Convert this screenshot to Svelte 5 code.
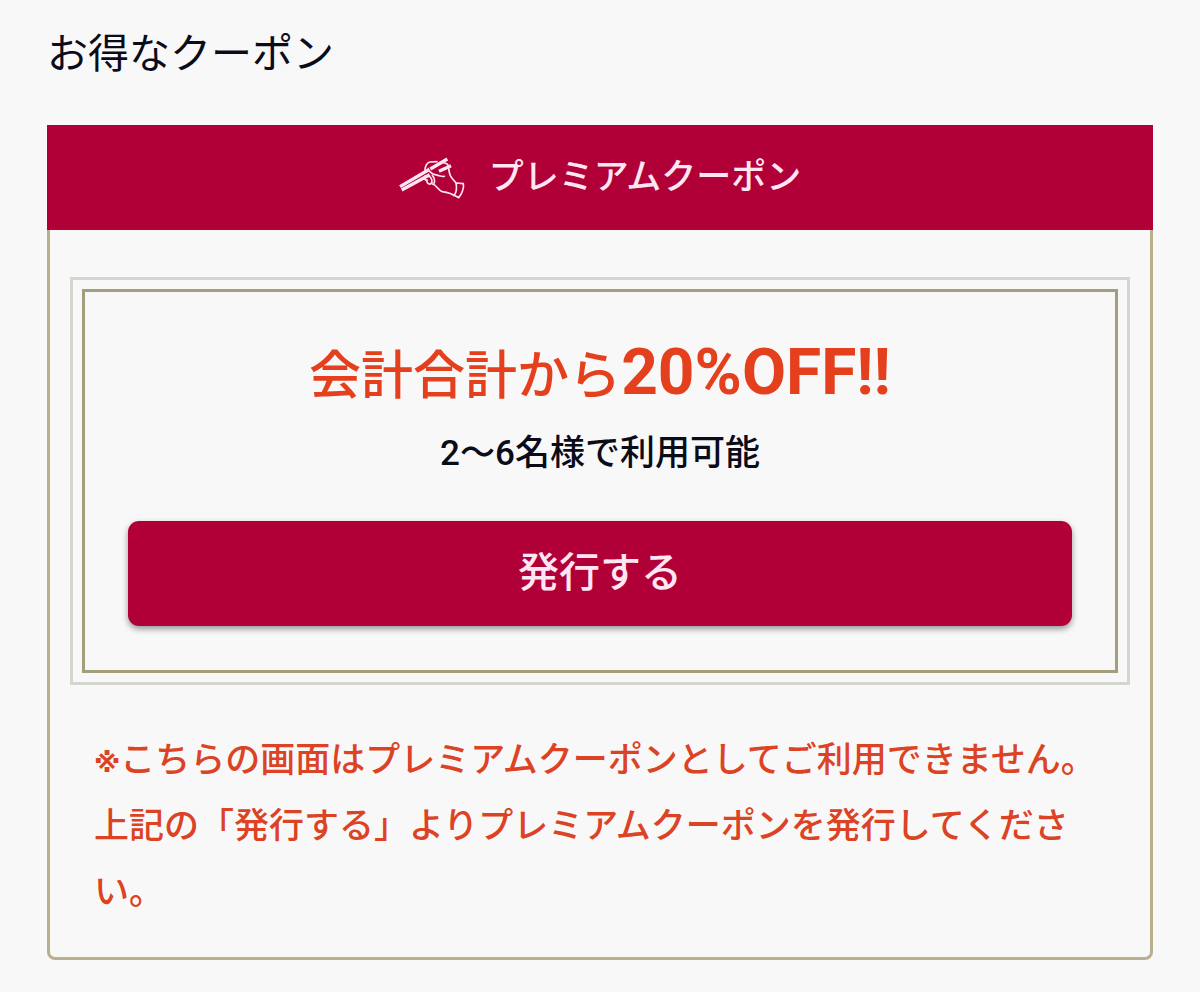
<script lang="ts">
  let issued = $state(false);

  const coupon = {
    offer: '会計合計から',
    discount: '20%OFF!!',
    condition: '2〜6名様で利用可能'
  };
</script>

<main class="page">
  <h1>お得なクーポン</h1>

  <section class="card">
    <header class="card-header">
      <svg class="icon" viewBox="28 32 198 132" aria-hidden="true">
        <g fill="none" stroke="currentColor" stroke-width="5" stroke-linecap="round" stroke-linejoin="round">
          <path d="M106 74 C107 62 112 52 121 50 L142 49" />
          <path d="M163 53 C170 53 174 57 176 61 M177 70 C178 77 179 84 182 91 C186 99 193 105 199 113" />
          <path d="M106 92 C102 99 107 107 113 104 M111 104 C111 116 121 120 126 112 M128 116 C142 119 144 135 158 139 C173 141 184 143 193 151" />
          <path d="M117 91 C123 96 129 104 126 112 M128 90 C134 98 138 104 133 114" />
          <path d="M116 70 C120 83 132 88 145 90 C152 92 158 95 164 93" />
          <path d="M199 113 L221 115 C224 128 216 147 207 157 L194 150 C201 139 202 127 199 113 Z" />
        </g>
        <g fill="none" stroke="currentColor" stroke-width="10">
          <path d="M31 124 L116 74 M122 71 L173 41" />
          <path d="M36 134 L120 88 M148 78 L184 61" />
        </g>
      </svg>
      <h2>プレミアムクーポン</h2>
    </header>

    <div class="card-body">
      <div class="frame">
        <div class="offer">
          <p class="headline">{coupon.offer}<strong>{coupon.discount}</strong></p>
          <p class="condition">{coupon.condition}</p>
          <button type="button" disabled={issued} onclick={() => (issued = true)}>発行する</button>
        </div>
      </div>

      <p class="note">
        <span class="mark">※</span>こちらの画面はプレミアムクーポンとしてご利用できません。<br />上記の「発行する」よりプレミアムクーポンを発行してください。
      </p>
    </div>
  </section>
</main>

<style>
  :global(body) {
    margin: 0;
    background: #f8f8f8;
  }
  .page {
    padding: 24px 47px 32px;
    color: #0b0c18;
    font-family: Roboto, 'Noto Sans CJK JP', sans-serif;
  }
  h1, h2, p { margin: 0; }
  h1 {
    margin-bottom: 41px;
    font-size: 41px;
    font-weight: 400;
    line-height: 60px;
  }
  .card {
    border: 3px solid #b9b08f;
    border-top: 0;
    border-radius: 0 0 8px 8px;
  }
  .card-header {
    display: flex;
    align-items: center;
    justify-content: center;
    gap: 24px;
    height: 105px;
    margin: 0 -3px;
    background: #b00037;
    color: #ffe6f2;
  }
  .icon {
    width: 66px;
    height: 44px;
  }
  h2 {
    font-size: 35px;
    font-weight: 500;
    line-height: 52px;
  }
  .card-body { padding: 47px 20px 31px; }
  .frame {
    padding: 9px;
    border: 3px solid #d5d6ce;
  }
  .offer {
    padding: 47px 43px 44px;
    border: 3px solid #a39e7c;
    text-align: center;
  }
  .headline {
    color: #e5401d;
    font-size: 52px;
    font-weight: 500;
    line-height: 76px;
  }
  .headline strong {
    font-size: 64px;
    font-weight: 700;
    line-height: 64px;
  }
  .condition {
    margin: 12px 0 40px;
    font-size: 35px;
    font-weight: 500;
    line-height: 54px;
  }
  button {
    display: block;
    width: 100%;
    height: 105px;
    padding: 0 0 10px;
    border: 0;
    border-radius: 11px;
    background: #b00037;
    box-shadow: 0 3px 6px rgba(0, 0, 0, 0.4);
    color: #ffe6f2;
    font: inherit;
    font-size: 41px;
    font-weight: 500;
    cursor: pointer;
  }
  .note {
    padding: 43px 24px 0;
    color: #dc4325;
    font-size: 35px;
    font-weight: 500;
    line-height: 66px;
  }
  .mark {
    font-family: 'DejaVu Sans', sans-serif;
    font-size: 27px;
    font-weight: 700;
    line-height: 1;
  }
</style>
